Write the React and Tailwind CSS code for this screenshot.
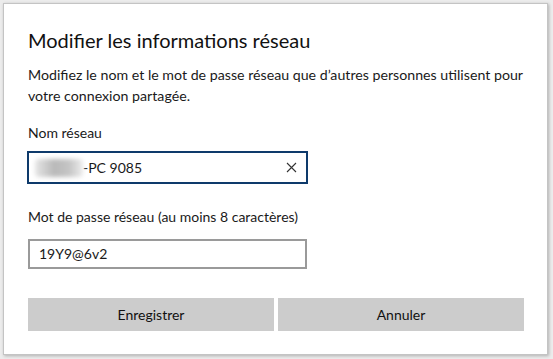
import React from 'react';

const ClearIcon = () => (
  <svg width="11" height="11" viewBox="0 0 11 11" className="text-[#333]">
    <path d="M1 1 L10 10 M10 1 L1 10" stroke="currentColor" strokeWidth="1.1" fill="none" />
  </svg>
);

export default function App() {
  return (
    <div className="w-[553px] h-[359px] overflow-hidden bg-[#ececec] font-['Lato',sans-serif] text-[#1a1a1a]">
      <div className="ml-[3px] mt-[3px] w-[545px] h-[352px] bg-white border border-[#c4c4c4] shadow-[1px_1px_3px_rgba(0,0,0,0.25)] px-[24px] pt-[22px]">
        <h1 className="text-[20px] leading-[28px] font-normal text-[#111]">
          Modifier les informations réseau
        </h1>

        <p className="mt-[10px] text-[14.2px] leading-[21px] text-[#1a1a1a] whitespace-nowrap">
          Modifiez le nom et le mot de passe réseau que d’autres personnes utilisent pour
          <br />
          votre connexion partagée.
        </p>

        <div className="mt-[16px] text-[14px] leading-[21px]">Nom réseau</div>
        <div className="mt-[8px] -ml-[1px] w-[281px] h-[33px] border-2 border-[#0e3a6b] flex items-center pl-[6px] pr-[9px]">
          <div className="w-[48px] h-[18px] rounded-sm bg-[linear-gradient(90deg,#e6e6e6,#b9b9b9_40%,#c4c4c4_70%,#ececec)] blur-[2px]" />
          <span className="text-[14px] leading-none">-PC 9085</span>
          <span className="ml-auto flex items-center">
            <ClearIcon />
          </span>
        </div>

        <div className="mt-[22px] text-[14px] leading-[21px]">
          Mot de passe réseau (au moins 8 caractères)
        </div>
        <div className="mt-[12px] w-[279px] h-[30px] border-2 border-[#9a9a9a] flex items-center pl-[9px]">
          <span className="text-[14px] leading-none">19Y9@6v2</span>
        </div>

        <div className="mt-[29px] flex gap-[4px] w-[496px]">
          <button className="flex-1 h-[33px] bg-[#cccccc] text-[14px] text-[#111]">Enregistrer</button>
          <button className="flex-1 h-[33px] bg-[#cccccc] text-[14px] text-[#111]">Annuler</button>
        </div>
      </div>
    </div>
  );
}
